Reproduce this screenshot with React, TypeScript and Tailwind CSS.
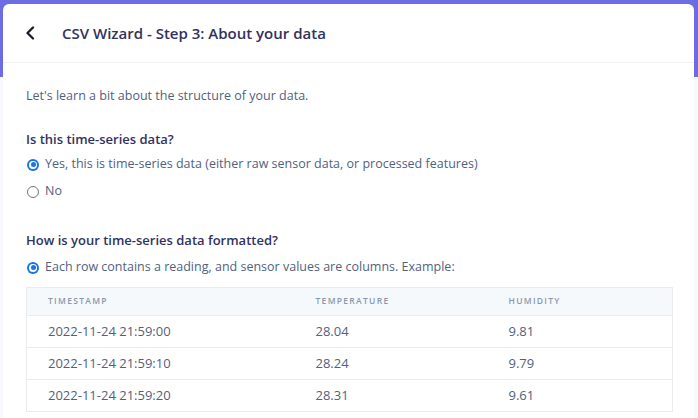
import React from 'react';

const rows = [
  { ts: '2022-11-24 21:59:00', temp: '28.04', hum: '9.81' },
  { ts: '2022-11-24 21:59:10', temp: '28.24', hum: '9.79' },
  { ts: '2022-11-24 21:59:20', temp: '28.31', hum: '9.61' },
];

const Radio: React.FC<{ checked?: boolean; label: string }> = ({ checked, label }) => (
  <label className="flex items-center h-[27px]">
    {checked ? (
      <span className="w-[12px] h-[12px] rounded-full bg-[#1a73e8] flex items-center justify-center">
        <span className="w-[8px] h-[8px] rounded-full bg-white flex items-center justify-center">
          <span className="w-[5px] h-[5px] rounded-full bg-[#1a73e8]" />
        </span>
      </span>
    ) : (
      <span className="w-[12px] h-[12px] rounded-full border border-[#767676] bg-white" />
    )}
    <span className="ml-[6px] text-[12.5px] text-[#525f7f]">{label}</span>
  </label>
);

const App: React.FC = () => {
  return (
    <div
      className="w-[698px] h-[418px] overflow-hidden pt-[4px] pl-[3px] pr-[4px] bg-[linear-gradient(to_bottom,#6c6de4_77px,#f8f9fe_77px)]"
      style={{ fontFamily: '"Open Sans", "Liberation Sans", sans-serif' }}
    >
      <div className="bg-white rounded-t-[6px] h-[500px]">
        <div className="h-[59px] border-b border-[#f0f1f4] flex items-center pl-[21px]">
          <svg width="12" height="14" viewBox="0 0 12 14" fill="none">
            <path d="M9 1.5 L3.5 7 L9 12.5" stroke="#1b1d2b" strokeWidth="2.3" strokeLinecap="round" strokeLinejoin="round" />
          </svg>
          <h1 className="ml-[26px] text-[15px] font-semibold text-[#32325d]">CSV Wizard - Step 3: About your data</h1>
        </div>

        <div className="px-[23px] pt-[23px]">
          <p className="text-[12.5px] leading-[20px] text-[#525f7f]">Let's learn a bit about the structure of your data.</p>

          <h2 className="mt-[23px] text-[13px] leading-[20px] font-semibold text-[#32325d]">Is this time-series data?</h2>
          <div className="mt-[2px] pl-[1px]">
            <Radio checked label="Yes, this is time-series data (either raw sensor data, or processed features)" />
            <Radio label="No" />
          </div>

          <h2 className="mt-[25px] text-[13px] leading-[20px] font-semibold text-[#32325d]">How is your time-series data formatted?</h2>
          <div className="mt-[4px] pl-[1px]">
            <Radio checked label="Each row contains a reading, and sensor values are columns. Example:" />
          </div>

          <table className="mt-[6px] w-[647px] border border-[#e9ecef] border-collapse">
            <thead>
              <tr className="bg-[#f6f9fc] h-[28px]">
                <th className="w-[269px] pl-[21px] text-left text-[8.5px] font-semibold tracking-[1.3px] text-[#8898aa]">TIMESTAMP</th>
                <th className="w-[193px] pl-[20px] text-left text-[8.5px] font-semibold tracking-[1.3px] text-[#8898aa]">TEMPERATURE</th>
                <th className="pl-[20px] text-left text-[8.5px] font-semibold tracking-[1.3px] text-[#8898aa]">HUMIDITY</th>
              </tr>
            </thead>
            <tbody>
              {rows.map((r) => (
                <tr key={r.ts} className="h-[32px] border-t border-[#e9ecef] text-[13px] text-[#525f7f]">
                  <td className="pl-[21px]">{r.ts}</td>
                  <td className="pl-[20px]">{r.temp}</td>
                  <td className="pl-[20px]">{r.hum}</td>
                </tr>
              ))}
            </tbody>
          </table>
        </div>
      </div>
    </div>
  );
};

export default App;
